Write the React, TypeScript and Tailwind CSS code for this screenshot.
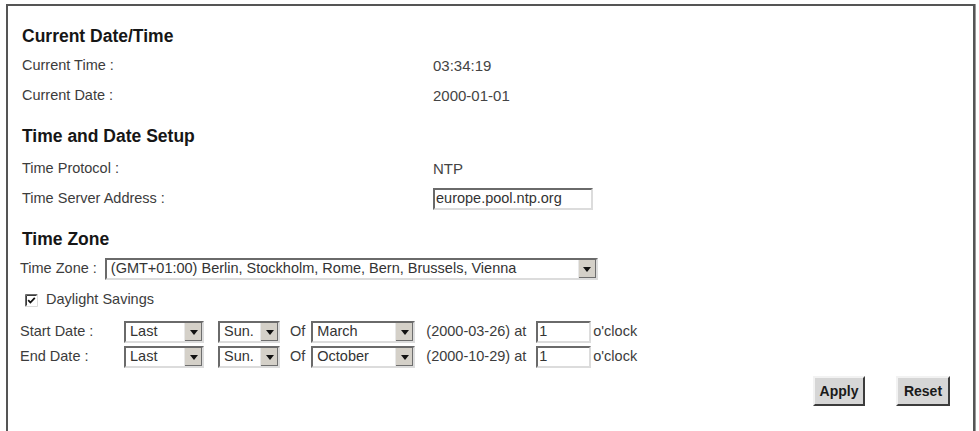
import type { ReactNode } from 'react'

const font = { fontFamily: '"Liberation Sans", Arial, sans-serif' }

function Heading({ children, className = '' }: { children: ReactNode; className?: string }) {
  return (
    <div className={`flex h-[30px] items-center text-[17.5px] font-bold text-[#161616] ${className}`}>
      {children}
    </div>
  )
}

function Row({ label, children, className = '' }: { label: string; children: ReactNode; className?: string }) {
  return (
    <div className={`flex h-[30px] items-center ${className}`}>
      <div className="w-[411px] shrink-0 text-[14.5px] text-[#3c3c3c]">{label}</div>
      <div className="text-[15px] text-[#444]">{children}</div>
    </div>
  )
}

function Arrow() {
  return (
    <div className="flex h-full w-[18px] shrink-0 items-center justify-center border-l border-[#e8e8e8] bg-[#d4d0c8] shadow-[inset_-1px_-1px_0_#6e6e6e]">
      <svg width="8" height="5" viewBox="0 0 8 5">
        <path d="M0 0h8L4 5z" fill="#111" />
      </svg>
    </div>
  )
}

function Select({ value, width }: { value: string; width: string }) {
  return (
    <div
      className={`flex h-[22px] shrink-0 items-stretch border-2 border-t-[#6a6a6a] border-l-[#6a6a6a] border-r-[#dcdcdc] border-b-[#dcdcdc] bg-white ${width}`}
    >
      <div className="flex flex-1 items-center overflow-hidden whitespace-nowrap pl-[4px] text-[14.5px] text-[#333]">
        {value}
      </div>
      <Arrow />
    </div>
  )
}

function TextBox({ value, width }: { value: string; width: string }) {
  return (
    <div
      className={`flex h-[22px] shrink-0 items-center border-2 border-t-[#6a6a6a] border-l-[#6a6a6a] border-r-[#dcdcdc] border-b-[#dcdcdc] bg-white pl-[1px] text-[14.5px] text-[#333] ${width}`}
    >
      {value}
    </div>
  )
}

function Button({ label, width }: { label: string; width: string }) {
  return (
    <button
      className={`h-[30px] ${width} border-2 border-t-[#f2f2f2] border-l-[#f2f2f2] border-r-[#3c3c3c] border-b-[#3c3c3c] bg-[#d6d6d6] text-[14px] font-bold text-[#1a1a1a]`}
    >
      {label}
    </button>
  )
}

function DateRow({ label, month, date, className = '' }: { label: string; month: string; date: string; className?: string }) {
  return (
    <div className={`flex h-[22px] items-center text-[14.5px] text-[#3c3c3c] ${className}`}>
      <div className="w-[104px] shrink-0 -ml-[2px]">{label}</div>
      <Select value="Last" width="w-[80px]" />
      <Select value="Sun." width="w-[62px] ml-[14px]" />
      <span className="ml-[10px]">Of</span>
      <Select value={month} width="w-[104px] ml-[6px]" />
      <span className="ml-[11px]">({date}) at</span>
      <TextBox value="1" width="w-[55px] ml-[10px]" />
      <span className="ml-[2px]">o'clock</span>
    </div>
  )
}

export default function App() {
  return (
    <div className="h-[431px] w-[979px] overflow-hidden bg-white" style={font}>
      <div className="ml-[6px] mt-[4px] h-[460px] w-[969px] border-2 border-b-0 border-[#555] pl-[14px] pt-[15px] shadow-[1px_0_0_#9a9a9a]">
        <Heading>Current Date/Time</Heading>
        <Row label="Current Time :">03:34:19</Row>
        <Row label="Current Date :">2000-01-01</Row>

        <Heading className="mt-[10px]">Time and Date Setup</Heading>
        <Row label="Time Protocol :" className="mt-[3px]">NTP</Row>
        <Row label="Time Server Address :">
          <TextBox value="europe.pool.ntp.org" width="w-[160px]" />
        </Row>

        <Heading className="mt-[10px]">Time Zone</Heading>
        <div className="flex h-[30px] items-center text-[14.5px] text-[#3c3c3c]">
          <span className="-ml-[2px]">Time Zone :</span>
          <Select
            value="(GMT+01:00) Berlin, Stockholm, Rome, Bern, Brussels, Vienna"
            width="w-[493px] ml-[8px]"
          />
        </div>
        <div className="mt-[2px] flex h-[28px] items-center text-[14.5px] text-[#3c3c3c]">
          <svg width="13" height="13" viewBox="0 0 13 13" className="ml-[3px] shrink-0">
            <rect x="0" y="0" width="13" height="13" fill="#fff" />
            <path d="M0.5 12.5V0.5H12.5" fill="none" stroke="#6a6a6a" />
            <path d="M1.5 11.5V1.5H11.5" fill="none" stroke="#3a3a3a" />
            <path d="M12.5 0.5V12.5H0.5" fill="none" stroke="#dcdcdc" />
            <path d="M3.2 6.2l2.2 2.3 4.4-4.6" fill="none" stroke="#111" strokeWidth="1.8" />
          </svg>
          <span className="ml-[8px]">Daylight Savings</span>
        </div>

        <DateRow label="Start Date :" month="March" date="2000-03-26" className="mt-[7px]" />
        <DateRow label="End Date :" month="October" date="2000-10-29" className="mt-[3px]" />

        <div className="mt-[8px] flex justify-end gap-[31px] pr-[23px]">
          <Button label="Apply" width="w-[52px]" />
          <Button label="Reset" width="w-[54px]" />
        </div>
      </div>
    </div>
  )
}
